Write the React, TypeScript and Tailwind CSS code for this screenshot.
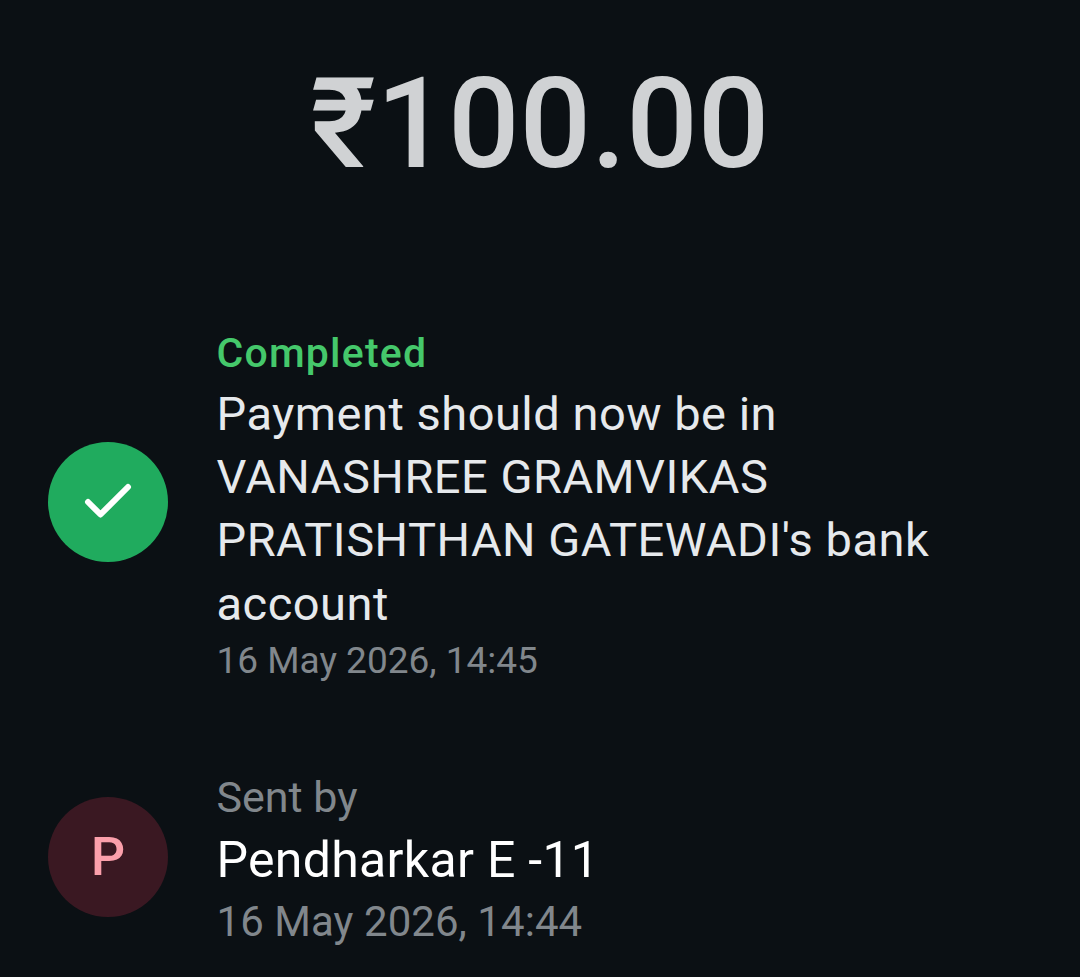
import { Check } from 'lucide-react'

export default function App() {
  return (
    <div className="h-[977px] w-[1080px] overflow-hidden bg-[#0b1014] font-['Roboto',sans-serif]">
      <div className="flex justify-center pt-[50px]">
        <h1 className="text-[126px] leading-[148px] font-medium text-[#d0d2d4]">₹100.00</h1>
      </div>

      <div className="mt-[130px] flex items-start pl-[48px]">
        <div className="mt-[114px] flex h-[120px] w-[120px] shrink-0 items-center justify-center rounded-full bg-[#20ab5e]">
          <Check className="h-[60px] w-[60px] text-white" strokeWidth={2.4} />
        </div>
        <div className="ml-[48.5px] flex flex-col">
          <span className="text-[41px] leading-[50px] font-medium tracking-[1.2px] text-[#45c86b]">Completed</span>
          <p className="mt-[4px] w-[800px] text-[47px] leading-[63.2px] tracking-[0.5px] text-[#e6e9ec]">
            Payment should now be in
            <br />
            VANASHREE GRAMVIKAS
            <br />
            PRATISHTHAN GATEWADI's bank
            <br />
            account
          </p>
          <span className="mt-[1px] text-[37px] leading-[50px] text-[#81878c]">16 May 2026, 14:45</span>
        </div>
      </div>

      <div className="mt-[80px] flex items-start pl-[48px]">
        <div className="mt-[31px] flex h-[120px] w-[120px] shrink-0 items-center justify-center rounded-full bg-[#3a1822]">
          <span className="text-[54px] font-medium text-[#fb9fab]">P</span>
        </div>
        <div className="ml-[48.5px] flex flex-col">
          <span className="text-[43px] leading-[62px] text-[#81878c]">Sent by</span>
          <span className="text-[50px] leading-[64px] tracking-[0.3px] text-white">Pendharkar E -11</span>
          <span className="text-[42px] leading-[60px] tracking-[0.05px] text-[#81878c]">16 May 2026, 14:44</span>
        </div>
      </div>
    </div>
  )
}
